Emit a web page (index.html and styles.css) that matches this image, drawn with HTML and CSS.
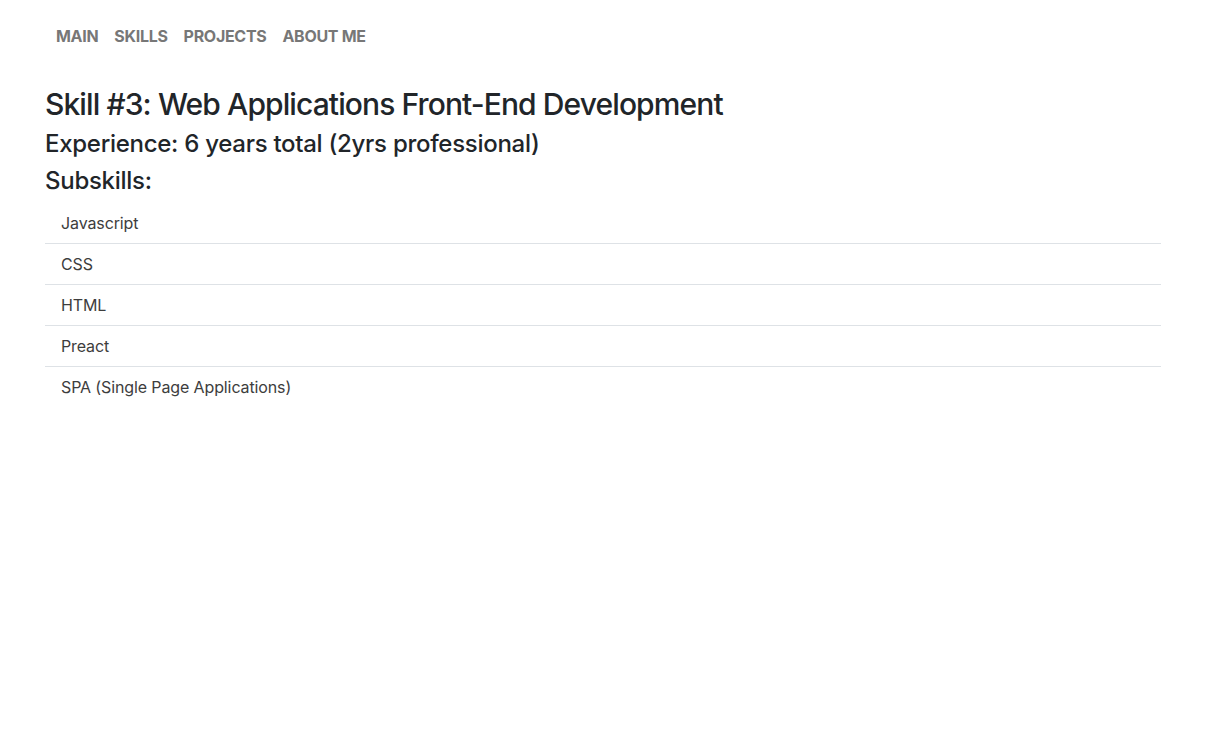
FILE: index.html
```html
<!DOCTYPE html>
<html lang="en">
<head>
<meta charset="utf-8">
<title>Skills</title>
<link rel="stylesheet" href="styles.css">
</head>
<body>
<nav class="navbar">
  <div class="container nav-inner">
    <a class="nav-link" href="#">MAIN</a>
    <a class="nav-link" href="#">SKILLS</a>
    <a class="nav-link" href="#">PROJECTS</a>
    <a class="nav-link" href="#">ABOUT ME</a>
  </div>
</nav>
<main class="container content">
  <h2 class="skill-title">Skill #3: Web Applications Front-End Development</h2>
  <h4 class="sub-title">Experience: 6 years total (2yrs professional)</h4>
  <h4 class="sub-title subskills">Subskills:</h4>
  <ul class="list-group">
    <li class="list-item">Javascript</li>
    <li class="list-item">CSS</li>
    <li class="list-item">HTML</li>
    <li class="list-item">Preact</li>
    <li class="list-item">SPA (Single Page Applications)</li>
  </ul>
</main>
</body>
</html>
```
FILE: styles.css
```css
* { box-sizing: border-box; }
html, body {
  margin: 0;
  padding: 0;
  background: #fff;
  color: #212529;
  font-family: Inter, "Noto Sans", sans-serif;
  font-size: 16px;
  line-height: 1.5;
}
.container {
  width: 1140px;
  margin: 0 auto;
  padding: 0 12px;
}
.navbar {
  padding: 16px 0;
}
.nav-inner {
  display: flex;
  padding-left: 15px;
}
.nav-link {
  display: block;
  padding: 8px 8px;
  color: #777;
  font-weight: 700;
  font-size: 16px;
  text-decoration: none;
  letter-spacing: -0.3px;
}
.content {
  padding-top: 14px;
}
.skill-title {
  margin: 0 0 8px;
  font-size: 30px;
  font-weight: 500;
  line-height: 1.2;
  letter-spacing: -0.9px;
}
.sub-title {
  margin: 0 0 8px;
  font-size: 24px;
  font-weight: 500;
  line-height: 1.2;
  letter-spacing: -0.28px;
}
.sub-title.subskills {
  margin-bottom: 7px;
}
.list-group {
  list-style: none;
  margin: 0;
  padding: 0;
}
.list-item {
  padding: 8px 16px;
  color: #3d3d3d;
  letter-spacing: -0.12px;
  border-bottom: 1px solid #dee2e6;
}
.list-item:last-child {
  border-bottom: none;
}
```
